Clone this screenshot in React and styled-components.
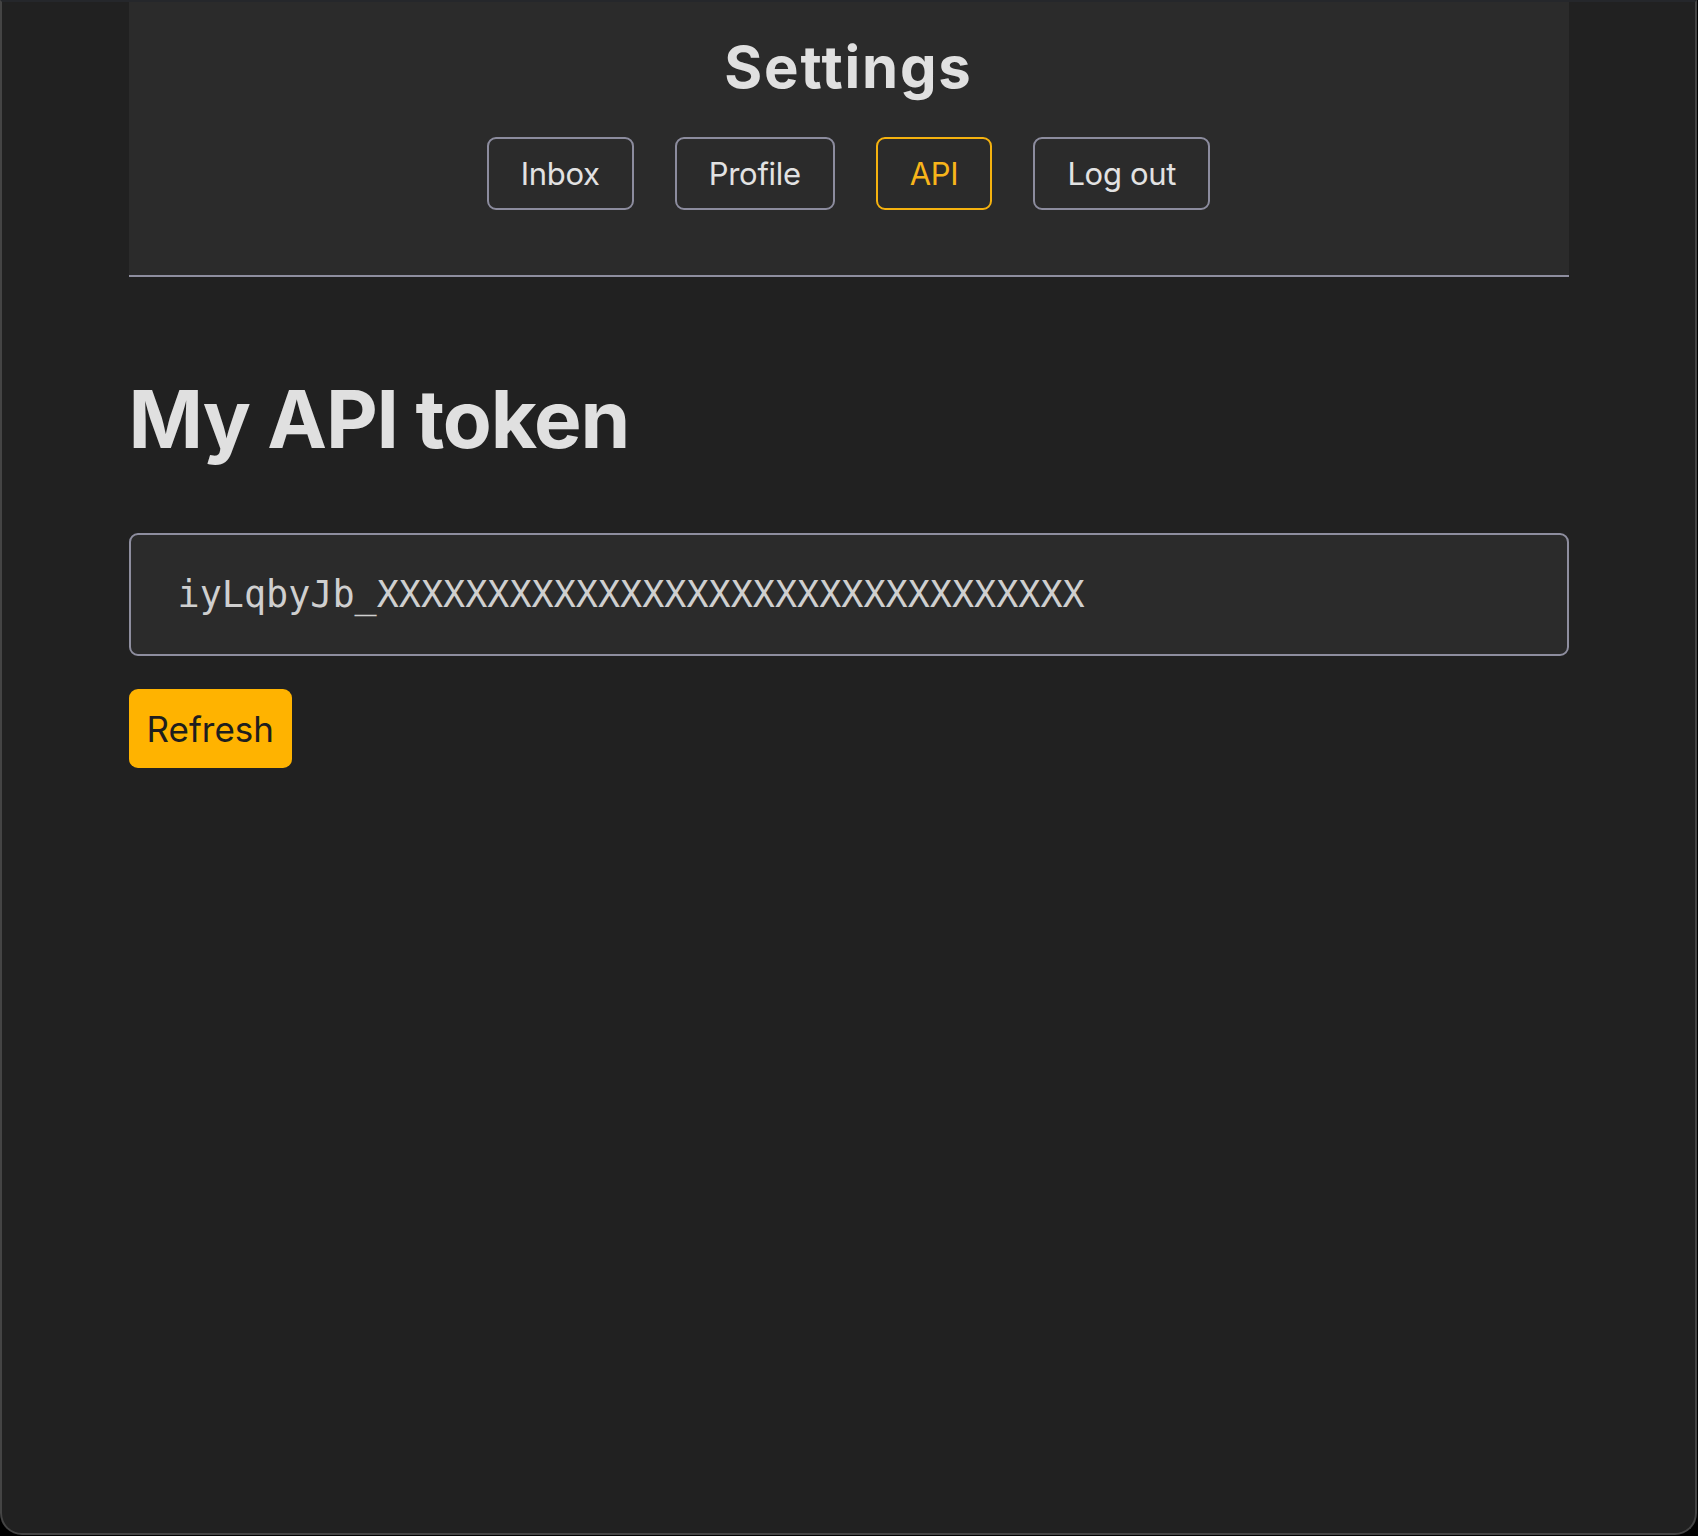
import React from "react";
import styled, { createGlobalStyle } from "styled-components";

const Global = createGlobalStyle`
  html, body { margin: 0; padding: 0; background: #000; }
  body { font-family: Inter, "Noto Sans", "Liberation Sans", sans-serif; }
  * { box-sizing: border-box; }
`;

const Window = styled.div`
  width: 1697px;
  height: 1535px;
  background: #212121;
  border: 2px solid #444444;
  border-top: 2px solid #25272b;
  border-radius: 0 0 22px 22px;
  overflow: hidden;
  color: #e0e0e0;
`;

const Container = styled.div`
  width: 1440px;
  margin: 0 auto;
  display: flex;
  flex-direction: column;
`;

const Header = styled.header`
  background: #2b2b2b;
  border-bottom: 2px solid #8e8e9f;
  padding: 32px 0 65px;
  display: flex;
  flex-direction: column;
  align-items: center;
  gap: 37px;
`;

const Title = styled.h1`
  margin: 0;
  font-size: 58px;
  line-height: 66px;
  font-weight: 700;
  letter-spacing: 1.8px;
  color: #e0e0e0;
`;

const Nav = styled.nav`
  display: flex;
  gap: 41px;
`;

const NavButton = styled.a`
  height: 73px;
  padding: 0 32px;
  display: flex;
  align-items: center;
  justify-content: center;
  border: 2px solid ${(p) => (p.$active ? "#f5b20f" : "#8c8c9e")};
  border-radius: 9px;
  color: ${(p) => (p.$active ? "#f8b51a" : "#e2e2e2")};
  font-size: 31px;
  font-weight: 400;
  text-decoration: none;
  letter-spacing: -0.3px;
`;

const Main = styled.main`
  padding-top: 93px;
  display: flex;
  flex-direction: column;
  align-items: flex-start;
`;

const Heading = styled.h2`
  margin: 0 0 66px;
  font-size: 80px;
  line-height: 97px;
  font-weight: 700;
  color: #e0e0e0;
  letter-spacing: -1.2px;
`;

const TokenBox = styled.div`
  width: 100%;
  height: 123px;
  padding: 0 47px;
  display: flex;
  align-items: center;
  background: #2b2b2b;
  border: 2px solid #8e8e9f;
  border-radius: 9px;
  font-family: "DejaVu Sans Mono", "Liberation Mono", monospace;
  font-size: 36.75px;
  color: #cfcfcf;
  margin-bottom: 33px;
`;

const PrimaryButton = styled.button`
  height: 79px;
  padding: 0 18px;
  border: none;
  border-radius: 9px;
  background: #ffb300;
  color: #1e1e1e;
  font-family: Inter, "Noto Sans", sans-serif;
  font-size: 35px;
  font-weight: 400;
  cursor: pointer;
`;

const navItems = ["Inbox", "Profile", "API", "Log out"];

export default function App() {
  return (
    <>
      <Global />
      <Window>
        <Container>
          <Header>
            <Title>Settings</Title>
            <Nav>
              {navItems.map((n) => (
                <NavButton key={n} $active={n === "API"}>
                  {n}
                </NavButton>
              ))}
            </Nav>
          </Header>
          <Main>
            <Heading>My API token</Heading>
            <TokenBox>iyLqbyJb_XXXXXXXXXXXXXXXXXXXXXXXXXXXXXXXX</TokenBox>
            <PrimaryButton>Refresh</PrimaryButton>
          </Main>
        </Container>
      </Window>
    </>
  );
}
